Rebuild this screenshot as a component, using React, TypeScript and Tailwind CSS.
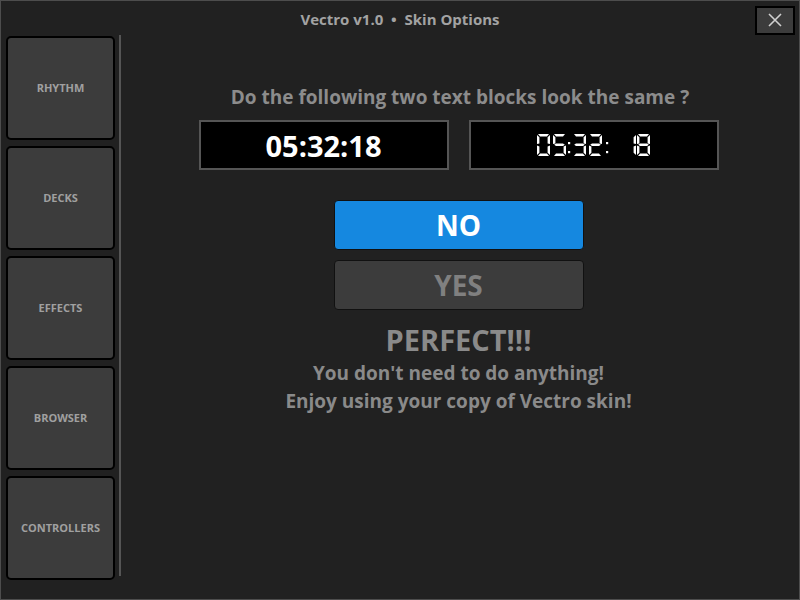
import React from 'react';

const font = { fontFamily: '"Open Sans", "Liberation Sans", sans-serif' };

const tabs = ['RHYTHM', 'DECKS', 'EFFECTS', 'BROWSER', 'CONTROLLERS'];

// seven segment digit map (a b c d e f g)
const segMap: Record<string, string> = {
  '0': 'abcdef',
  '1': 'bc',
  '2': 'abged',
  '3': 'abgcd',
  '5': 'afgcd',
  '8': 'abcdefg',
};

const segPoly: Record<string, string> = {
  a: '1,0 12,0 10,2.4 3,2.4',
  b: '13,1 13,10 10.6,9.4 10.6,3.2',
  c: '13,11.6 13,21 10.6,18.8 10.6,12.4',
  d: '1,22 12,22 10,19.6 3,19.6',
  e: '0,11.6 0,21 2.4,18.8 2.4,12.4',
  f: '0,1 0,10 2.4,9.4 2.4,3.2',
  g: '1.2,10.8 3,9.6 10,9.6 11.8,10.8 10,12 3,12',
};

function Digit({ d, x }: { d: string; x: number }) {
  return (
    <g transform={`translate(${x},0)`}>
      {segMap[d].split('').map((s) => (
        <polygon key={s} points={segPoly[s]} fill="#ffffff" />
      ))}
    </g>
  );
}

function SegmentClock() {
  return (
    <svg width="114" height="22" viewBox="0 0 114 22" aria-label="05:32:18">
      <Digit d="0" x={0} />
      <Digit d="5" x={16} />
      <rect x="31" y="8" width="2.2" height="2.2" fill="#fff" />
      <rect x="31" y="17" width="2.2" height="2.2" fill="#fff" />
      <Digit d="3" x={36} />
      <Digit d="2" x={52} />
      <rect x="69" y="8" width="2.2" height="2.2" fill="#fff" />
      <rect x="69" y="17" width="2.2" height="2.2" fill="#fff" />
      <Digit d="1" x={86} />
      <Digit d="8" x={100} />
    </svg>
  );
}

export default function App() {
  return (
    <div
      className="w-[800px] h-[600px] bg-[#212121] border border-[#4d4d4d] flex flex-col overflow-hidden"
      style={font}
    >
      <div className="h-[34px] grid grid-cols-[1fr_auto_1fr] items-center">
        <div />
        <div className="text-[15px] font-bold text-[#a3a3a3] pt-[2px]">
          Vectro v1.0 &nbsp;•&nbsp; Skin Options
        </div>
        <div className="flex justify-end pr-[4px]">
          <button className="w-[40px] h-[29px] bg-[#3c3c3c] border-2 border-black flex items-center justify-center mt-[4px]">
            <svg width="14" height="14" viewBox="0 0 14 14">
              <path d="M1 1L13 13M13 1L1 13" stroke="#d0d0d0" strokeWidth="1.6" />
            </svg>
          </button>
        </div>
      </div>

      <div className="flex flex-1">
        <div className="flex flex-col gap-[6px] pl-[5px] pt-[1px]">
          {tabs.map((t) => (
            <button
              key={t}
              className="w-[109px] h-[104px] bg-[#3c3c3c] border-2 border-black rounded-[5px] flex items-center justify-center text-[11px] font-bold text-[#a0a0a0]"
            >
              {t}
            </button>
          ))}
        </div>
        <div className="w-[2px] bg-[#555555] ml-[4px] mb-[23px]" />

        <div className="flex-1 flex flex-col items-center pt-[50px]">
          <div className="text-[19px] leading-[24px] font-bold text-[#8c8c8c]">
            Do the following two text blocks look the same ?
          </div>

          <div className="flex gap-[20px] mt-[11px] mr-[3px]">
            <div className="w-[250px] h-[50px] bg-black border-2 border-[#555555] flex items-center justify-center">
              <span className="text-[29px] font-bold text-white leading-none mt-[1px]">05:32:18</span>
            </div>
            <div className="w-[250px] h-[50px] bg-black border-2 border-[#555555] flex items-center justify-center">
              <SegmentClock />
            </div>
          </div>

          <div className="flex flex-col gap-[10px] mt-[30px] mr-[3px]">
            <button className="w-[250px] h-[50px] bg-[#1588e0] border border-[#111] rounded-[4px] text-[28px] font-bold text-white">
              NO
            </button>
            <button className="w-[250px] h-[50px] bg-[#3c3c3c] border border-[#111] rounded-[4px] text-[28px] font-bold text-[#808080]">
              YES
            </button>
          </div>

          <div className="mt-[12px] mr-[3px] flex flex-col items-center font-bold text-[#8a8a8a]">
            <div className="text-[29px] leading-[36px]">PERFECT!!!</div>
            <div className="text-[19px] leading-[28px] mt-[1px]">You don't need to do anything!</div>
            <div className="text-[19px] leading-[28px]">Enjoy using your copy of Vectro skin!</div>
          </div>
        </div>
      </div>
    </div>
  );
}
